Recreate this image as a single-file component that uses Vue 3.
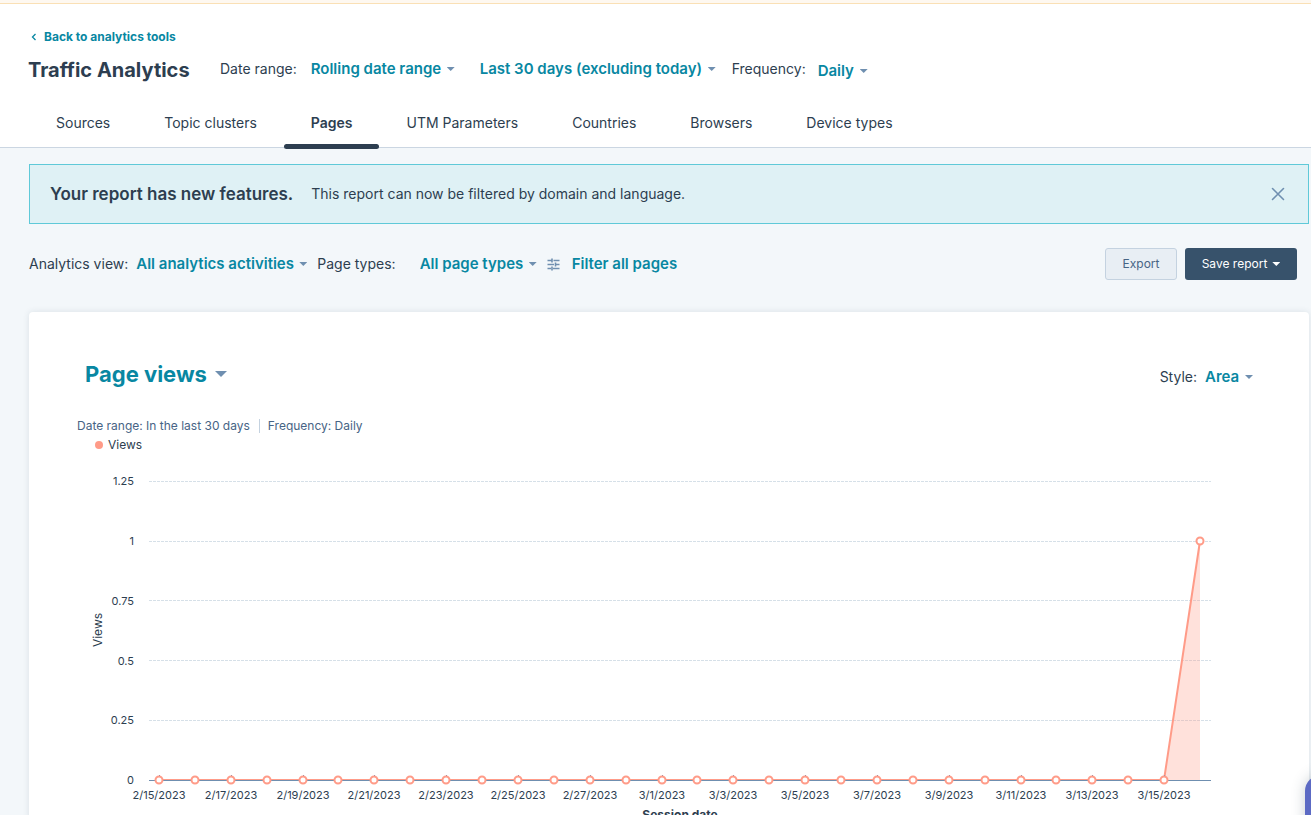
<template>
  <div class="page">
    <div class="trial-strip"></div>

    <header class="header">
      <a href="#" class="back-link">
        <svg width="6" height="8" viewBox="0 0 6 8"><path d="M4.5 1L1.5 4l3 3" fill="none" stroke="currentColor" stroke-width="1.3" /></svg>
        Back to analytics tools
      </a>
      <div class="title-row">
        <h1>Traffic Analytics</h1>
        <div class="filters">
          <label for="range-type">Date range:</label>
          <span class="dropdown range-type">
            <select id="range-type"><option>Rolling date range</option></select>
            <i class="caret"></i>
          </span>
          <span class="dropdown range">
            <select id="range" aria-label="Date range period"><option>Last 30 days (excluding today)</option></select>
            <i class="caret"></i>
          </span>
          <label for="frequency">Frequency:</label>
          <span class="dropdown frequency">
            <select id="frequency"><option>Daily</option></select>
            <i class="caret"></i>
          </span>
        </div>
      </div>
      <nav class="tabs">
        <a
          v-for="tab in tabs"
          :key="tab"
          href="#"
          class="tab"
          :class="{ active: tab === activeTab }"
          @click.prevent="activeTab = tab"
        >{{ tab }}</a>
      </nav>
    </header>

    <main class="content">
      <section v-if="showBanner" class="banner">
        <h2>Your report has new features.</h2>
        <p>This report can now be filtered by domain and language.</p>
        <button class="close" aria-label="Close" @click="showBanner = false">
          <svg width="14" height="14" viewBox="0 0 14 14"><path d="M1.5 1.5l11 11M12.5 1.5l-11 11" fill="none" stroke="#6f8fb0" stroke-width="1.6" stroke-linecap="round" /></svg>
        </button>
      </section>

      <div class="toolbar">
        <label for="view">Analytics view:</label>
        <span class="dropdown view">
          <select id="view"><option>All analytics activities</option></select>
          <i class="caret"></i>
        </span>
        <label for="page-types">Page types:</label>
        <span class="dropdown page-types">
          <select id="page-types"><option>All page types</option></select>
          <i class="caret"></i>
        </span>
        <button class="filter-button">
          <svg width="13" height="13" viewBox="0 0 13 13" fill="none" stroke="#6f8fb0" stroke-width="1.6">
            <path d="M0.5 2.5H4.5M6.5 2.5H12.5M0.5 6.5H7M9 6.5H12.5M0.5 10.5H4M6 10.5H12.5M5 0.5V4.5M8.5 4.5V8.5M5 8.5V12.5" />
          </svg>
          Filter all pages
        </button>
        <div class="actions">
          <button class="export">Export</button>
          <button class="save">Save report <i class="caret"></i></button>
        </div>
      </div>

      <section class="card">
        <div class="card-head">
          <span class="dropdown metric">
            <select aria-label="Metric"><option>Page views</option></select>
            <i class="caret"></i>
          </span>
          <div class="style-picker">
            <label for="chart-style">Style:</label>
            <span class="dropdown">
              <select id="chart-style"><option>Area</option></select>
              <i class="caret"></i>
            </span>
          </div>
        </div>

        <div class="summary">
          <span>Date range: In the last 30 days</span>
          <span>Frequency: Daily</span>
        </div>
        <div class="legend"><i class="dot"></i>Views</div>

        <div ref="chartBox" class="chart">
          <svg :width="width" height="368">
            <g v-for="tick in yTicks" :key="tick">
              <line v-if="tick" class="grid" :x1="plotLeft" :x2="plotRight" :y1="lineY(tick)" :y2="lineY(tick)" />
              <text class="tick" :x="plotLeft - 15" :y="yPos(tick) + 4" text-anchor="end">{{ tick }}</text>
            </g>
            <text class="axis-label" text-anchor="middle" transform="translate(25 176) rotate(-90)">Views</text>

            <polygon class="area" :points="areaPoints" />
            <polyline class="series" :points="linePoints" />
            <line class="axis" :x1="plotLeft" :x2="plotRight" :y1="lineY(0)" :y2="lineY(0)" />
            <line v-for="point in labelled" :key="point.date" class="axis" :x1="point.x" :x2="point.x" y1="321" y2="326" />
            <circle v-for="point in points" :key="point.date" class="marker" :cx="point.x" :cy="point.y" r="3.5" />
            <text v-for="point in labelled" :key="point.date" class="tick" :x="point.x" y="345" text-anchor="middle">{{ point.date }}</text>
            <text class="axis-title" :x="(plotLeft + plotRight) / 2" y="365" text-anchor="middle">Session date</text>
          </svg>
        </div>
      </section>
    </main>

    <button class="chat" aria-label="Open chat"></button>
  </div>
</template>

<script setup>
import { ref, computed, onMounted, onUnmounted } from 'vue';

const tabs = ['Sources', 'Topic clusters', 'Pages', 'UTM Parameters', 'Countries', 'Browsers', 'Device types'];
const activeTab = ref('Pages');
const showBanner = ref(true);

const yTicks = [1.25, 1, 0.75, 0.5, 0.25, 0];

// 30 days starting on Feb 15, only the last one has a view
const days = Array.from({ length: 30 }, (_, i) => {
  const day = new Date(2023, 1, 15 + i);
  return {
    date: `${day.getMonth() + 1}/${day.getDate()}/${day.getFullYear()}`,
    views: i === 29 ? 1 : 0
  };
});

const chartBox = ref(null);
const width = ref(1184);
const plotLeft = 72;
const plotRight = computed(() => width.value - 50);

const yPos = (value) => 326 - value * 239;
const lineY = (value) => Math.floor(yPos(value)) + 0.5;

const points = computed(() => {
  const first = plotLeft + 10;
  const step = (plotRight.value - 11 - first) / (days.length - 1);
  return days.map((day, i) => ({ date: day.date, x: Math.round(first + i * step), y: yPos(day.views) }));
});

// every second day gets a tick and a date
const labelled = computed(() => points.value.filter((p, i) => i % 2 === 0));

const linePoints = computed(() => points.value.map((p) => `${p.x},${p.y}`).join(' '));
const areaPoints = computed(() => {
  const last = points.value[points.value.length - 1];
  return `${linePoints.value} ${last.x},${yPos(0)} ${points.value[0].x},${yPos(0)}`;
});

const measure = () => {
  width.value = chartBox.value.clientWidth;
};

onMounted(() => {
  measure();
  window.addEventListener('resize', measure);
});

onUnmounted(() => {
  window.removeEventListener('resize', measure);
});
</script>

<style>
body {
  margin: 0;
  background: #f3f7fa;
}
</style>

<style scoped>
* {
  box-sizing: border-box;
}

.page {
  height: 100vh;
  overflow: hidden;
  background: #f3f7fa;
  color: #2d3e50;
  font-family: Inter, "Liberation Sans", sans-serif;
  font-size: 14px;
  font-weight: 400;
  line-height: 20px;
}

h1,
h2,
p {
  margin: 0;
}

button,
select {
  padding: 0;
  border: 0;
  background: none;
  font: inherit;
  color: inherit;
  cursor: pointer;
}

a {
  color: inherit;
  text-decoration: none;
}

.trial-strip {
  height: 4px;
  background: #fef8f0;
  border-bottom: 1px solid #fae0b5;
}

.header {
  height: 144px;
  padding: 23px 28px 0;
  background: #fff;
  border-bottom: 1px solid #cbd6e2;
}

.back-link {
  display: flex;
  align-items: center;
  gap: 7px;
  padding-left: 3px;
  color: #0887a2;
  font-size: 12px;
  font-weight: 700;
}

.title-row {
  display: flex;
  align-items: center;
  height: 44px;
}

h1 {
  width: 192px;
  padding-top: 2px;
  font-size: 20px;
  font-weight: 700;
  line-height: 28px;
  white-space: nowrap;
}

.filters,
.dropdown {
  display: flex;
  align-items: center;
}

.dropdown {
  gap: 5px;
}

.dropdown select {
  appearance: none;
  color: #0887a2;
  font-size: 15px;
  font-weight: 600;
}

.caret {
  width: 8px;
  height: 4px;
  background: #6f8fb0;
  clip-path: polygon(0 0, 100% 0, 50% 100%);
}

.range-type {
  margin: 0 25px 0 14px;
}

.range {
  margin-right: 16px;
}

.frequency {
  margin-left: 12px;
  padding-top: 4px;
}

.tabs {
  display: flex;
  padding-left: 1px;
}

.tab {
  position: relative;
  height: 56px;
  padding: 22px 27px 0;
}

.tab.active {
  font-weight: 600;
}

.tab.active::after {
  content: "";
  position: absolute;
  right: 0;
  bottom: -2px;
  left: 0;
  height: 5px;
  border-radius: 3px;
  background: #2d3e50;
}

.content {
  padding: 16px 2px 0 29px;
}

.banner {
  display: flex;
  align-items: center;
  height: 60px;
  padding: 0 23px 0 20px;
  border: 1px solid #5fc9d8;
  background: #dff1f5;
}

.banner h2 {
  margin-right: 18px;
  font-size: 17px;
  font-weight: 600;
}

.close {
  display: flex;
  margin-left: auto;
}

.toolbar {
  display: flex;
  align-items: center;
  height: 32px;
  margin: 24px 12px 32px 0;
}

.view {
  margin: 0 10px 0 8px;
}

.page-types {
  margin: 0 10px 0 24px;
}

.filter-button {
  display: flex;
  align-items: center;
  gap: 12px;
  color: #0887a2;
  font-size: 15px;
  font-weight: 600;
}

.actions {
  display: flex;
  gap: 8px;
  margin-left: auto;
}

.actions button {
  display: flex;
  align-items: center;
  justify-content: center;
  gap: 5px;
  height: 32px;
  border-radius: 3px;
  font-size: 12px;
}

.actions .export {
  width: 72px;
  border: 1px solid #c4d2e0;
  background: #e8eef4;
  color: #476485;
}

.actions .save {
  width: 112px;
  background: #37526b;
  color: #fff;
}

.save .caret {
  background: #fff;
}

.card {
  padding: 48px 48px 0;
  border-radius: 4px;
  background: #fff;
  box-shadow: 0 0 6px rgba(45, 62, 80, 0.12);
}

.card-head {
  display: flex;
  align-items: center;
  justify-content: space-between;
  height: 28px;
  padding: 0 8px;
}

.metric {
  gap: 8px;
}

.metric select {
  font-size: 22px;
  font-weight: 700;
  line-height: 28px;
}

.metric .caret {
  width: 12px;
  height: 6px;
}

.style-picker {
  display: flex;
  gap: 8px;
  padding-top: 6px;
}

.summary {
  display: flex;
  align-items: center;
  height: 20px;
  margin-top: 28px;
  color: #476485;
  font-size: 12px;
  line-height: 14px;
}

.summary span + span {
  margin-left: 9px;
  padding-left: 8px;
  border-left: 1px solid #c4d2e0;
}

.legend {
  display: flex;
  align-items: center;
  gap: 5px;
  height: 18px;
  padding-left: 18px;
  font-size: 12px;
}

.dot {
  width: 8px;
  height: 8px;
  border-radius: 50%;
  background: #ff9b88;
}

.chart svg {
  display: block;
}

.tick {
  fill: #2d3e50;
  font-size: 11px;
}

.axis-label {
  fill: #2d3e50;
  font-size: 12px;
}

.axis-title {
  fill: #2d3e50;
  font-size: 12px;
  font-weight: 700;
}

.grid {
  stroke: #d6e0e8;
  stroke-dasharray: 3 1;
}

.axis {
  stroke: #6f8fb0;
  shape-rendering: crispEdges;
}

.area {
  fill: #ff9b88;
  fill-opacity: 0.3;
}

.series {
  fill: none;
  stroke: #ff9b88;
  stroke-width: 2;
}

.marker {
  fill: #fff;
  stroke: #ff9b88;
  stroke-width: 2;
}

.chat {
  position: fixed;
  right: -54px;
  bottom: -20px;
  width: 60px;
  height: 60px;
  border-radius: 16px;
  background: #5c6ac4;
  box-shadow: 0 0 14px rgba(45, 62, 80, 0.25);
}
</style>
